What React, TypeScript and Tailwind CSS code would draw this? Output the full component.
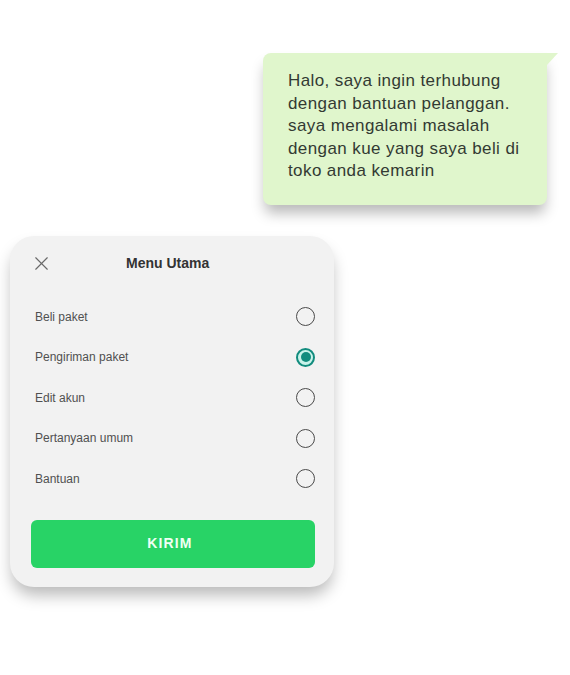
import { X } from 'lucide-react';

const options = ['Beli paket', 'Pengiriman paket', 'Edit akun', 'Pertanyaan umum', 'Bantuan'];

const Radio = ({ checked }: { checked: boolean }) =>
  checked ? (
    <span className="flex h-[19px] w-[19px] items-center justify-center rounded-full border-2 border-[#128c7e] bg-[#c9f3ea]">
      <span className="h-[10px] w-[10px] rounded-full bg-[#128c7e]" />
    </span>
  ) : (
    <span className="h-[19px] w-[19px] rounded-full border-[1.5px] border-[#4a4a4a]" />
  );

export default function App() {
  const selected = 1;

  return (
    <div
      className="flex min-h-[675px] w-[570px] flex-col bg-white pt-[53px]"
      style={{ fontFamily: '"Liberation Sans", Arial, sans-serif' }}
    >
      {/* Chat bubble */}
      <div className="relative ml-[263px] w-[284px] rounded-[8px] rounded-tr-none bg-[#e0f6cc] pb-[22px] pl-[25px] pr-[10px] pt-[17px] shadow-[0_10px_14px_-2px_rgba(0,0,0,0.28)]">
        <p className="whitespace-nowrap text-[17px] leading-[22.5px] tracking-[0.4px] text-[#333a33]">
          Halo, saya ingin terhubung
          <br />
          dengan bantuan pelanggan.
          <br />
          saya mengalami masalah
          <br />
          dengan kue yang saya beli di
          <br />
          toko anda kemarin
        </p>
        {/* tail */}
        <svg className="absolute -right-[11px] top-0" width="11" height="12" viewBox="0 0 11 12">
          <path d="M0 0 H11 L0 12 Z" fill="#e0f6cc" />
        </svg>
      </div>

      {/* Menu card */}
      <div className="ml-[10px] mt-[31px] w-[324px] rounded-[24px] bg-[#f2f2f2] pb-[19px] pl-[21px] pr-[19px] pt-[16.5px] shadow-[0_10px_16px_-2px_rgba(0,0,0,0.28)]">
        <div className="flex h-[23px] items-center">
          <X className="-ml-[1px] h-[23px] w-[23px] text-[#6a6a6a]" strokeWidth={1.2} />
          <span className="ml-[73px] text-[14px] font-bold text-[#333]">Menu Utama</span>
        </div>

        <div className="mt-[21.5px] flex flex-col">
          {options.map((o, i) => (
            <div key={o} className="flex h-[40.5px] items-center justify-between pl-[4px]">
              <span className="text-[12px] text-[#505050]">{o}</span>
              <Radio checked={i === selected} />
            </div>
          ))}
        </div>

        <button className="mt-[20.5px] flex h-[48px] w-[284px] items-center justify-center rounded-[6px] bg-[#28d366] pr-[6px] text-[14px] font-bold tracking-[0.08em] text-[#effff3]">
          KIRIM
        </button>
      </div>
    </div>
  );
}
